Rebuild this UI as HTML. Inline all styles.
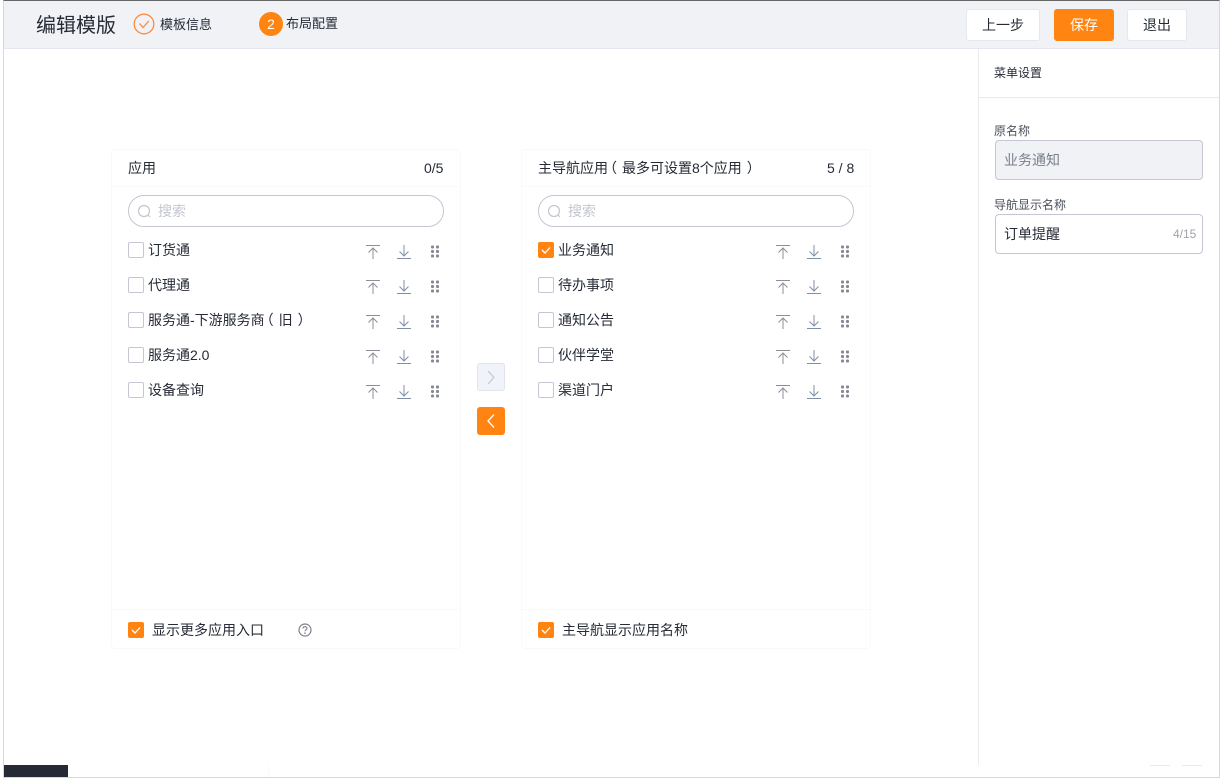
<!DOCTYPE html>
<html lang="zh-CN">
<head>
<meta charset="utf-8">
<title>编辑模版</title>
<style>
html,body{margin:0;padding:0;background:#fff;}
body{position:relative;width:1223px;height:781px;overflow:hidden;font-family:"Liberation Sans","Noto Sans CJK SC",sans-serif;color:#262b36;font-size:14px;}
.a{position:absolute;box-sizing:border-box;}
.t{position:absolute;white-space:nowrap;line-height:20px;}
.lp{position:relative;left:-5px;}
.rp{position:relative;left:5px;}
.panel{position:absolute;box-sizing:border-box;top:149px;width:350px;height:500px;border:1px solid #f8f9fa;border-radius:4px;}
.cb{position:absolute;box-sizing:border-box;width:16px;height:16px;border:1px solid #c4c7d3;border-radius:2px;background:#fff;}
.cb.on{background:#ff8411;border-color:#ff8411;}
.cb svg{position:absolute;left:-1px;top:-1px;}
.ic{position:absolute;}
.btn{position:absolute;box-sizing:border-box;top:9px;height:32px;border:1px solid #e4e7ef;border-radius:3px;background:#fff;text-align:center;line-height:30px;font-size:14px;color:#262b36;}
.search{position:absolute;box-sizing:border-box;top:195px;width:316px;height:32px;border:1px solid #c4c7d3;border-radius:16px;background:#fff;}
.ph{color:#c3c6cf;}
</style>
</head>
<body>
<!-- outer frame -->
<div class="a" style="left:3px;top:0;width:1217px;height:778px;border-left:1px solid #d8d8d8;border-right:1px solid #d8d8d8;border-bottom:1px solid #d8d8d8;"></div>
<div class="a" style="left:4px;top:765px;width:64px;height:12px;background:#252a35;"></div>
<div class="a" style="left:1150px;top:765px;width:20px;height:1px;background:#e8e8e8;"></div>
<div class="a" style="left:1182px;top:765px;width:20px;height:1px;background:#e8e8e8;"></div>
<div class="a" style="left:268px;top:765px;width:1px;height:12px;background:#fafafa;"></div>

<!-- header -->
<div class="a" style="left:3px;top:0;width:1217px;height:49px;background:#f0f2f5;border-top:1px solid #666;border-bottom:1px solid #e4e7ef;border-left:1px solid #d8d8d8;border-right:1px solid #d8d8d8;"></div>
<div class="t" style="left:36px;top:13px;font-size:20px;line-height:26px;">编辑模版</div>
<svg class="ic" style="left:133px;top:13px;" width="22" height="22" viewBox="0 0 22 22" fill="none"><circle cx="11" cy="11" r="9.800" stroke="#ff8a3a" stroke-width="1.300"/><path d="M6.500 10.500 L10 14.500 L15.800 8" stroke="#ff8a3a" stroke-width="1.300"/></svg>
<div class="t" style="left:160px;top:15px;font-size:13px;">模板信息</div>
<div class="a" style="left:259px;top:12px;width:24px;height:24px;border-radius:50%;background:#ff8411;color:#fff;text-align:center;line-height:24px;font-size:14px;">2</div>
<div class="t" style="left:286px;top:14px;font-size:13px;">布局配置</div>
<div class="btn" style="left:966px;width:74px;">上一步</div>
<div class="btn" style="left:1054px;width:60px;background:#ff8411;border-color:#ff8411;color:#fff;">保存</div>
<div class="btn" style="left:1127px;width:60px;">退出</div>

<!-- right side panel -->
<div class="a" style="left:978px;top:49px;width:1px;height:716px;background:#e9ebf0;"></div>
<div class="a" style="left:979px;top:97px;width:240px;height:1px;background:#e9ebf0;"></div>
<div class="t" style="left:994px;top:63px;font-size:12px;">菜单设置</div>
<div class="t" style="left:994px;top:121px;font-size:12px;color:#4a4f5a;">原名称</div>
<div class="a" style="left:995px;top:140px;width:208px;height:40px;background:#f0f2f5;border:1px solid #c4c7d3;border-radius:4px;"></div>
<div class="t" style="left:1004px;top:150px;color:#7a7f8a;">业务通知</div>
<div class="t" style="left:994px;top:195px;font-size:12px;color:#4a4f5a;">导航显示名称</div>
<div class="a" style="left:995px;top:214px;width:208px;height:40px;background:#fff;border:1px solid #c4c7d3;border-radius:4px;"></div>
<div class="t" style="left:1004px;top:224px;">订单提醒</div>
<div class="t" style="left:1173px;top:224px;font-size:12px;color:#a0a3ab;">4/15</div>

<!-- left panel -->
<div class="panel" style="left:111px;"></div>
<div class="a" style="left:112px;top:186px;width:348px;height:1px;background:#f8f9fa;"></div>
<div class="a" style="left:112px;top:609px;width:348px;height:1px;background:#f8f9fa;"></div>
<div class="t" style="left:128px;top:158px;font-size:14px;">应用</div>
<div class="t" style="left:424px;top:158px;font-size:14px;">0/5</div>
<div class="search" style="left:128px;"></div>
<svg class="ic" style="left:137px;top:204px;" width="15" height="15" viewBox="0 0 15 15" fill="none"><circle cx="7" cy="7" r="5.500" stroke="#c3c6cf" stroke-width="1.200"/><path d="M11 11 L13 13" stroke="#c3c6cf" stroke-width="1.200"/></svg>
<div class="t ph" style="left:158px;top:201px;">搜索</div>

<div class="cb" style="left:128px;top:242px;"></div><div class="t" style="left:148px;top:240px;">订货通</div>
<div class="cb" style="left:128px;top:277px;"></div><div class="t" style="left:148px;top:275px;">代理通</div>
<div class="cb" style="left:128px;top:312px;"></div><div class="t" style="left:148px;top:310px;">服务通-下游服务商<span class="lp">（</span>旧<span class="rp">）</span></div>
<div class="cb" style="left:128px;top:347px;"></div><div class="t" style="left:148px;top:345px;">服务通2.0</div>
<div class="cb" style="left:128px;top:382px;"></div><div class="t" style="left:148px;top:380px;">设备查询</div>

<!-- left icons -->
<svg class="ic" style="left:360px;top:240px;" width="85" height="175" viewBox="0 0 85 175" fill="none">
<defs>
<g id="row">
<path d="M6 5.500H20" stroke="#8c8f98" stroke-width="1"/>
<path d="M13 19V8M8.500 12.500L13 8L17.500 12.500" stroke="#8c8f98" stroke-width="1"/>
<path d="M37 18.500H51" stroke="#7f8fa8" stroke-width="1"/>
<path d="M44 5V16M39.500 11.500L44 16L48.500 11.500" stroke="#7f8fa8" stroke-width="1"/>
<g fill="#858893"><rect x="71" y="5.500" width="3" height="3" rx="1"/><rect x="76" y="5.500" width="3" height="3" rx="1"/><rect x="71" y="10" width="3" height="3" rx="1"/><rect x="76" y="10" width="3" height="3" rx="1"/><rect x="71" y="14.500" width="3" height="3" rx="1"/><rect x="76" y="14.500" width="3" height="3" rx="1"/></g>
</g>
</defs>
<use href="#row"/><use href="#row" y="35"/><use href="#row" y="70"/><use href="#row" y="105"/><use href="#row" y="140"/>
</svg>

<div class="cb on" style="left:128px;top:622px;"><svg width="16" height="16" viewBox="0 0 16 16" fill="none"><path d="M4 8L7 11L12 5.500" stroke="#fff" stroke-width="1.300"/></svg></div>
<div class="t" style="left:152px;top:620px;">显示更多应用入口</div>
<svg class="ic" style="left:298px;top:623px;" width="14" height="14" viewBox="0 0 14 14" fill="none"><circle cx="7" cy="7" r="6" stroke="#7e818c" stroke-width="1.200"/><path d="M5 5.500C5 4.300 6 3.700 7 3.700C8.200 3.700 9 4.500 9 5.400C9 6.700 7 6.800 7 8.300" stroke="#7e818c" stroke-width="1.100"/><circle cx="7" cy="10.200" r=".8" fill="#7e818c"/></svg>

<!-- middle buttons -->
<div class="a" style="left:477px;top:363px;width:28px;height:28px;background:#f0f3fa;border:1px solid #e1e4ec;border-radius:3px;"></div>
<svg class="ic" style="left:477px;top:363px;" width="28" height="28" viewBox="0 0 28 28" fill="none"><path d="M11 8L17 14.500L11 21" stroke="#c9ccd6" stroke-width="1.300"/></svg>
<div class="a" style="left:477px;top:407px;width:28px;height:28px;background:#ff8411;border-radius:3px;"></div>
<svg class="ic" style="left:477px;top:407px;" width="28" height="28" viewBox="0 0 28 28" fill="none"><path d="M17 7.500L11 14L17 20.500" stroke="#fff" stroke-width="1.300"/></svg>

<!-- right panel -->
<div class="panel" style="left:521px;"></div>
<div class="a" style="left:522px;top:186px;width:348px;height:1px;background:#f8f9fa;"></div>
<div class="a" style="left:522px;top:609px;width:348px;height:1px;background:#f8f9fa;"></div>
<div class="t" style="left:538px;top:158px;font-size:14px;">主导航应用<span class="lp">（</span>最多可设置8个应用<span class="rp">）</span></div>
<div class="t" style="left:827px;top:158px;font-size:14px;">5 / 8</div>
<div class="search" style="left:538px;"></div>
<svg class="ic" style="left:547px;top:204px;" width="15" height="15" viewBox="0 0 15 15" fill="none"><circle cx="7" cy="7" r="5.500" stroke="#c3c6cf" stroke-width="1.200"/><path d="M11 11 L13 13" stroke="#c3c6cf" stroke-width="1.200"/></svg>
<div class="t ph" style="left:568px;top:201px;">搜索</div>

<div class="cb on" style="left:538px;top:242px;"><svg width="16" height="16" viewBox="0 0 16 16" fill="none"><path d="M4 8L7 11L12 5.500" stroke="#fff" stroke-width="1.300"/></svg></div><div class="t" style="left:558px;top:240px;">业务通知</div>
<div class="cb" style="left:538px;top:277px;"></div><div class="t" style="left:558px;top:275px;">待办事项</div>
<div class="cb" style="left:538px;top:312px;"></div><div class="t" style="left:558px;top:310px;">通知公告</div>
<div class="cb" style="left:538px;top:347px;"></div><div class="t" style="left:558px;top:345px;">伙伴学堂</div>
<div class="cb" style="left:538px;top:382px;"></div><div class="t" style="left:558px;top:380px;">渠道门户</div>

<svg class="ic" style="left:770px;top:240px;" width="85" height="175" viewBox="0 0 85 175" fill="none">
<use href="#row"/><use href="#row" y="35"/><use href="#row" y="70"/><use href="#row" y="105"/><use href="#row" y="140"/>
</svg>

<div class="cb on" style="left:538px;top:622px;"><svg width="16" height="16" viewBox="0 0 16 16" fill="none"><path d="M4 8L7 11L12 5.500" stroke="#fff" stroke-width="1.300"/></svg></div>
<div class="t" style="left:562px;top:620px;">主导航显示应用名称</div>
</body>
</html>
